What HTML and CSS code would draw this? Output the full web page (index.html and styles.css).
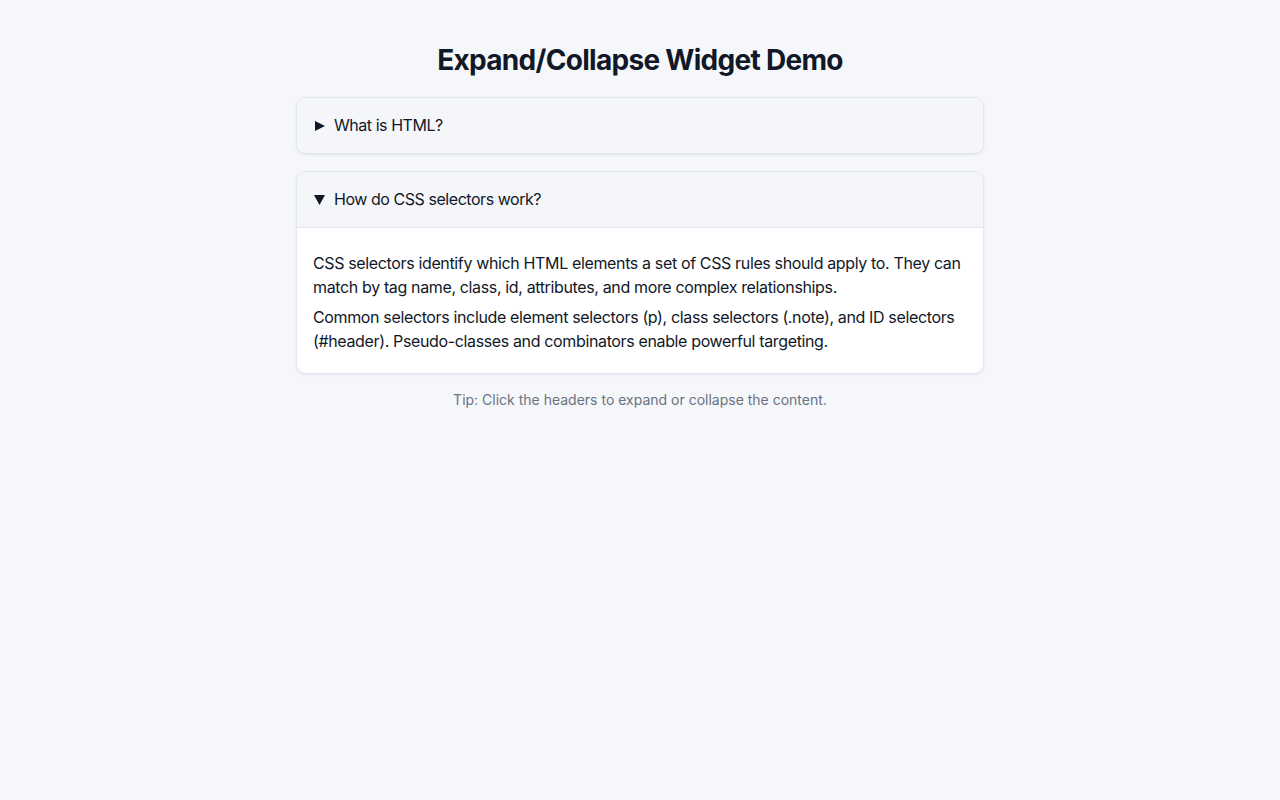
FILE: index.html
```html
<!DOCTYPE html>
<html lang="en">
<head>
<meta charset="utf-8">
<title>Expand/Collapse Widget Demo</title>
<link rel="stylesheet" href="styles.css">
</head>
<body>
<main class="container">
  <h1 class="title">Expand/Collapse Widget Demo</h1>
  <section class="card">
    <div class="card-header">
      <svg class="caret" width="12" height="12" viewBox="0 0 12 12"><polygon points="1,1 11,6 1,11" fill="#111827"/></svg>
      <span>What is HTML?</span>
    </div>
  </section>
  <section class="card">
    <div class="card-header open">
      <svg class="caret" width="12" height="12" viewBox="0 0 12 12"><polygon points="0,1 11,1 5.5,11" fill="#111827"/></svg>
      <span>How do CSS selectors work?</span>
    </div>
    <div class="card-body">
      <p>CSS selectors identify which HTML elements a set of CSS rules should apply to. They can match by tag name, class, id, attributes, and more complex relationships.</p>
      <p>Common selectors include element selectors (p), class selectors (.note), and ID selectors (#header). Pseudo-classes and combinators enable powerful targeting.</p>
    </div>
  </section>
  <p class="tip">Tip: Click the headers to expand or collapse the content.</p>
</main>
</body>
</html>
```

FILE: styles.css
```css
html, body {
  margin: 0;
  padding: 0;
  background: #f5f7fb;
  font-family: Inter, "Liberation Sans", sans-serif;
  color: #111827;
}
.container {
  width: 688px;
  margin: 0 auto;
  padding-top: 42px;
  display: flex;
  flex-direction: column;
}
.title {
  margin: 0 0 19px;
  font-size: 28px;
  line-height: 36px;
  font-weight: 700;
  letter-spacing: -0.7px;
  text-align: center;
  color: #111827;
}
.card {
  border: 1px solid #e3e6eb;
  border-radius: 10px;
  background: #ffffff;
  box-shadow: 0 1px 3px rgba(17, 24, 39, 0.08);
  overflow: hidden;
  margin-bottom: 17px;
}
.card-header {
  display: flex;
  align-items: center;
  gap: 8px;
  padding: 16px 16px 16px 17px;
  font-size: 16px;
  line-height: 23px;
  letter-spacing: -0.45px;
  background: #f5f6fa;
}
.card-header.open {
  border-bottom: 1px solid #e3e6eb;
}
.caret {
  flex: none;
  width: 12px;
  height: 12px;
}
.card-body {
  padding: 24px 16px 20px;
  display: flex;
  flex-direction: column;
  gap: 7px;
  background: #ffffff;
}
.card-body p {
  margin: 0;
  font-size: 16px;
  line-height: 23.5px;
  letter-spacing: -0.36px;
}
.tip {
  margin: -1px 0 0;
  text-align: center;
  font-size: 14px;
  line-height: 20px;
  color: #6b7280;
}
```
